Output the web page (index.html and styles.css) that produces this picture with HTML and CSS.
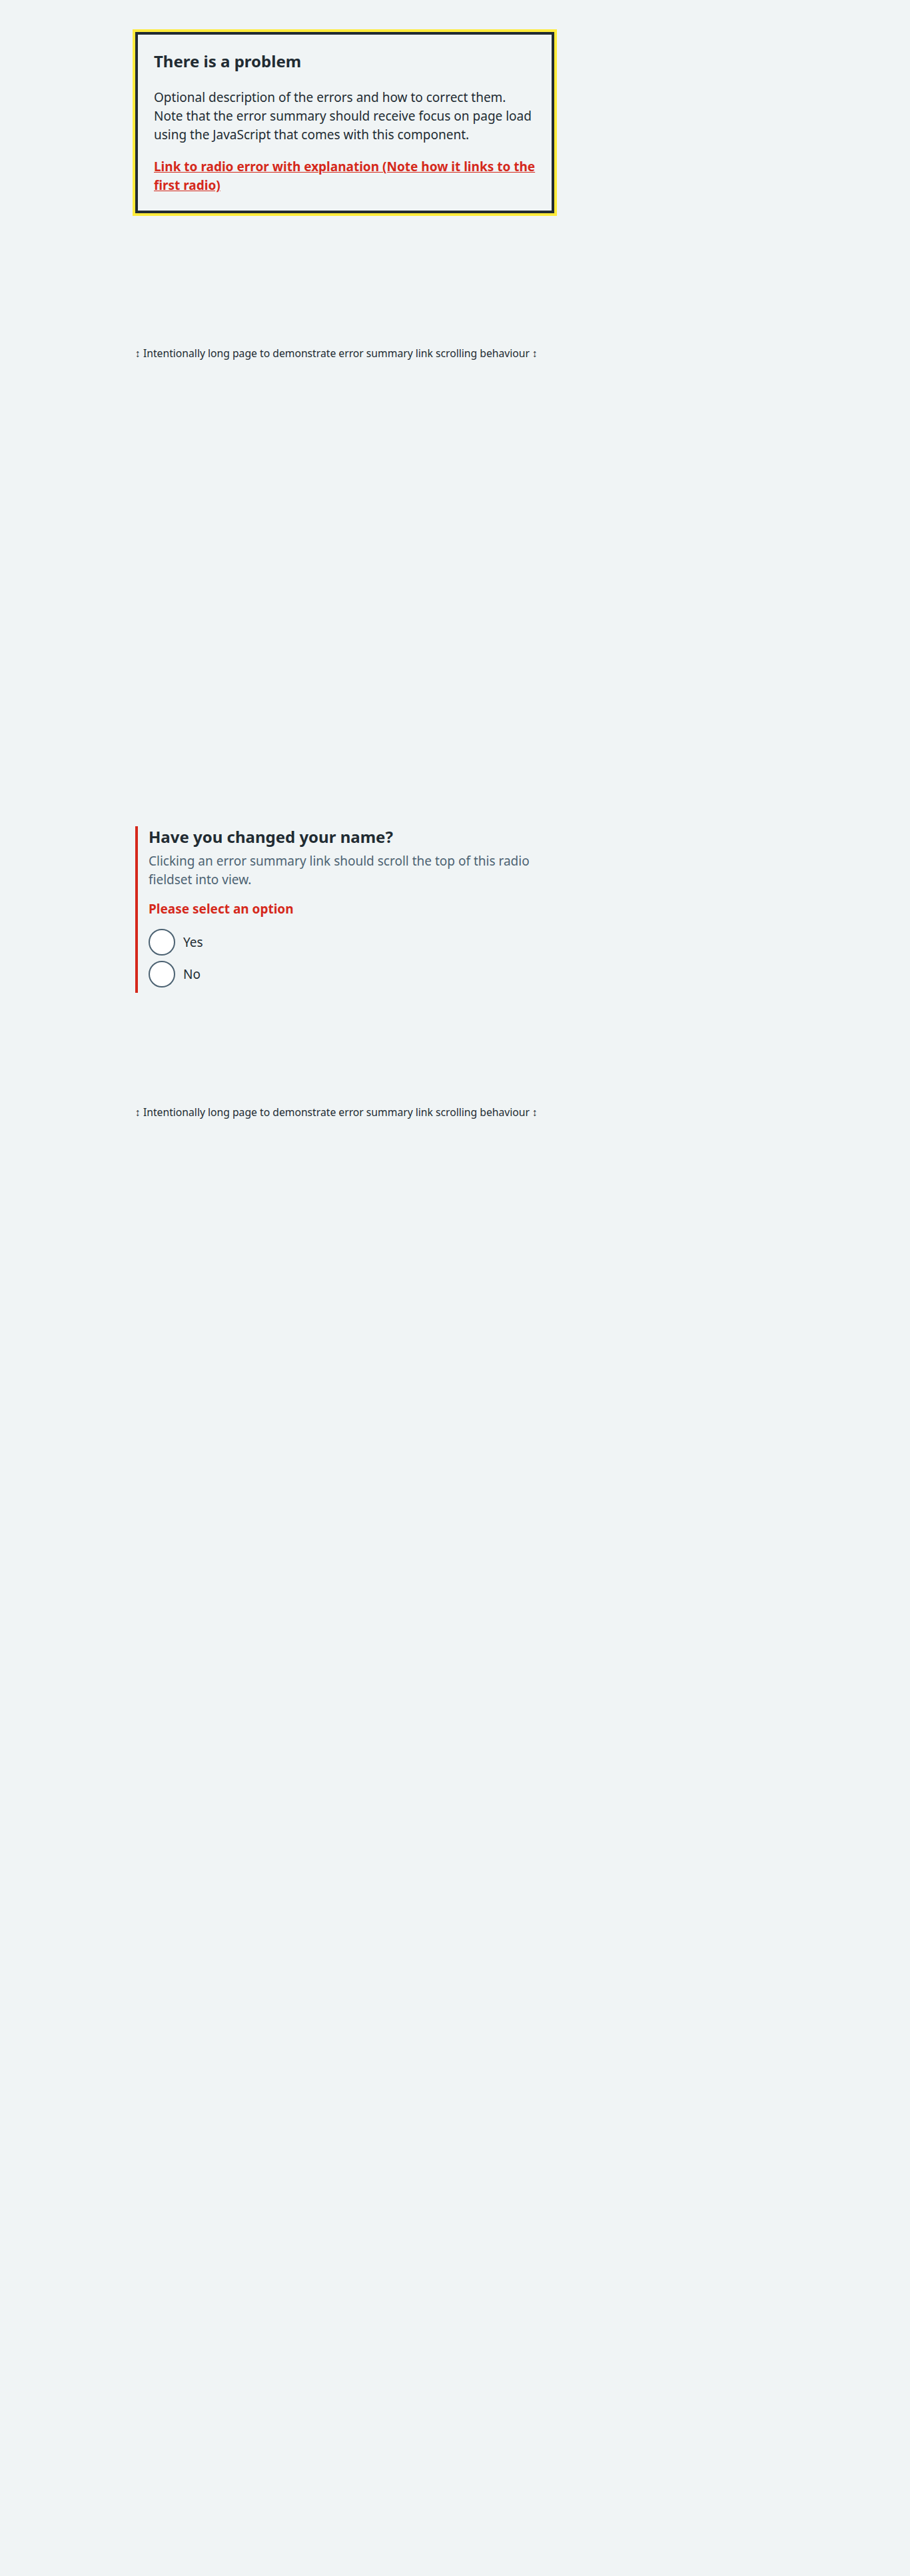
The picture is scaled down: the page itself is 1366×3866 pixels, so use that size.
FILE: index.html
```html
<!DOCTYPE html>
<html lang="en">
<head>
<meta charset="utf-8">
<title>Error summary</title>
<link rel="stylesheet" href="styles.css">
</head>
<body>
<div class="container">
  <main class="main">
    <div class="column">
      <div class="error-summary" tabindex="-1">
        <h2 class="error-summary__title">There is a problem</h2>
        <div class="error-summary__body">
          <p>Optional description of the errors and how to correct them. Note that the error summary should receive focus on page load using the JavaScript that comes with this component.</p>
          <ul class="error-summary__list">
            <li><a href="#example">Link to radio error with explanation (Note how it links to the first radio)</a></li>
          </ul>
        </div>
      </div>

      <p class="note">↕ Intentionally long page to demonstrate error summary link scrolling behaviour ↕</p>

      <div class="form-group form-group--error">
        <fieldset class="fieldset">
          <legend class="legend">Have you changed your name?</legend>
          <div class="hint">Clicking an error summary link should scroll the top of this radio fieldset into view.</div>
          <span class="error-message">Please select an option</span>
          <div class="radios">
            <div class="radio"><span class="radio__input"></span><span class="radio__label">Yes</span></div>
            <div class="radio"><span class="radio__input"></span><span class="radio__label">No</span></div>
          </div>
        </fieldset>
      </div>

      <p class="note note--second">↕ Intentionally long page to demonstrate error summary link scrolling behaviour ↕</p>
    </div>
  </main>
</div>
</body>
</html>
```

FILE: styles.css
```css
html, body {
  margin: 0;
  padding: 0;
  background: #f0f4f5;
}
body {
  font-family: "Noto Sans", "Open Sans", sans-serif;
  color: #212b32;
  font-size: 19px;
  line-height: 28px;
}
.container {
  max-width: 960px;
  margin: 0 auto;
}
.main {
  padding-top: 48px;
}
.column {
  width: 629px;
}
.error-summary {
  border: 4px solid #212b32;
  box-shadow: 0 0 0 4px #ffeb3b;
  padding: 24px;
  outline: none;
}
.error-summary__title {
  font-size: 24px;
  line-height: 32px;
  font-weight: 700;
  margin: 0 0 24px;
}
.error-summary__body p {
  margin: 0 0 20px;
}
.error-summary__list {
  list-style: none;
  margin: 0;
  padding: 0;
}
.error-summary__list a {
  color: #d5281b;
  font-weight: 700;
  text-decoration: underline;
}
.note {
  font-size: 15.7px;
  line-height: 24px;
  margin: 198px 0 0;
}
.note--second {
  margin-top: 167px;
}
.form-group--error {
  margin-top: 698px;
  border-left: 4px solid #d5281b;
  padding-left: 16px;
}
.fieldset {
  border: 0;
  margin: 0;
  padding: 0;
  min-width: 0;
}
.legend {
  padding: 0;
  font-size: 24px;
  line-height: 32px;
  font-weight: 700;
  margin-bottom: 6px;
}
.hint {
  color: #4c6272;
  margin-bottom: 16px;
}
.error-message {
  display: block;
  color: #d5281b;
  font-weight: 700;
  margin-bottom: 16px;
}
.radio {
  display: flex;
  align-items: center;
  min-height: 40px;
  margin-bottom: 8px;
}
.radio__input {
  box-sizing: border-box;
  width: 40px;
  height: 40px;
  border: 2px solid #4c6272;
  border-radius: 50%;
  background: #fff;
  flex: none;
}
.radio__label {
  padding: 0 12px;
}
```
